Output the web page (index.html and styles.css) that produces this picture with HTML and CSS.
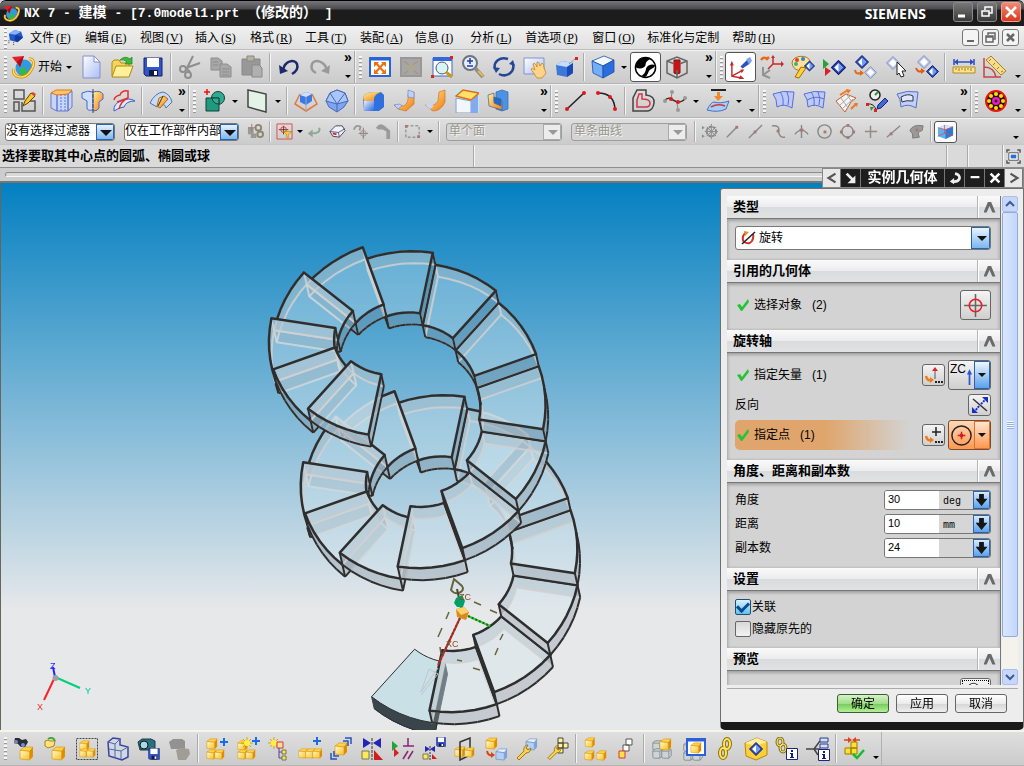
FILE: index.html
```
<!DOCTYPE html>
<html lang="zh-CN">
<head>
    <meta charset="utf-8">
    <title>NX 7 - 建模</title>
    <link rel="stylesheet" href="styles.css">
</head>
<body>
    <!-- shared icon parts -->
    <svg class="defs" aria-hidden="true">
        <defs>
            <linearGradient id="gBlue" x1="0" y1="0" x2="1" y2="1"><stop offset="0" stop-color="#e4efff"/><stop offset="1" stop-color="#2f66e0"/></linearGradient>
            <linearGradient id="gPale" x1="0" y1="0" x2="1" y2="1"><stop offset="0" stop-color="#ffffff"/><stop offset="1" stop-color="#a9bdf5"/></linearGradient>
            <linearGradient id="gGold" x1="0" y1="0" x2="1" y2="1"><stop offset="0" stop-color="#fffbd0"/><stop offset="1" stop-color="#ffbe20"/></linearGradient>
            <linearGradient id="gFire" x1="0" y1="0" x2="1" y2="1"><stop offset="0" stop-color="#fff09a"/><stop offset="1" stop-color="#f47a10"/></linearGradient>
        </defs>
        <symbol id="cubeY" viewBox="0 0 14 14"><path d="M1 4L5 1H13L10 5Z" fill="#ffd24a" stroke="#d89400" stroke-width=".6"/><path d="M1 4L10 5V13L1 12Z" fill="url(#gGold)" stroke="#d89400" stroke-width=".6"/><path d="M10 5L13 1V10L10 13Z" fill="#e08c00"/></symbol>
        <symbol id="cubeB" viewBox="0 0 14 14"><path d="M1 4L5 1H13L10 5Z" fill="#e6f1ff" stroke="#5f83c4" stroke-width=".6"/><path d="M1 4L10 5V13L1 12Z" fill="#b5d0f5" stroke="#5f83c4" stroke-width=".6"/><path d="M10 5L13 1V10L10 13Z" fill="#7ba2dd"/></symbol>
        <symbol id="cubeW" viewBox="0 0 14 14"><path d="M1 4Q1 2 5 1H11Q13 1 13 3V10L10 13H3Q1 13 1 11ZM1 4H10V13M10 4L13 2" fill="#cdd3d6" stroke="#77848d"/></symbol>
        <symbol id="dia" viewBox="0 0 14 14"><path d="M7 .5L13.500 7L7 13.500L.5 7Z" fill="#2a4fc0" stroke="#101c70"/><path d="M7 3L11 7L7 11L3 7Z" fill="#fff"/><path d="M7 3L11 7L7 11Z" fill="#6f9df0"/></symbol>
        <symbol id="diaP" viewBox="0 0 14 14"><path d="M7 .5L13.500 7L7 13.500L.5 7Z" fill="#b9c5e6" stroke="#8591bd"/><path d="M7 3L11 7L7 11L3 7Z" fill="#fff"/></symbol>
        <symbol id="floppy" viewBox="0 0 20 20"><path d="M1 1H19V19H3L1 17Z" fill="#3455c8" stroke="#15206a"/><path d="M4 1H16V10H4Z" fill="#fff"/><path d="M6 13H15V19H6Z" fill="#111a40"/><path d="M11 14H14V18H11Z" fill="#fff"/></symbol>
        <symbol id="plus" viewBox="0 0 8 8"><path d="M4 0V8M0 4H8" stroke="#1b6be8" stroke-width="2"/></symbol>
        <symbol id="wrench" viewBox="0 0 16 16"><path d="M1 14L8 7C7 3 10 1 12 1L10 4L12 6L15 4C15 7 13 9 10 9L3 16Z" fill="#ffd24a" stroke="#8a6500" stroke-width=".8"/></symbol>
        <symbol id="info" viewBox="0 0 12 12"><path d="M.5.5H11.500V11.500H.5Z" fill="#fff" stroke="#1c2580"/><path d="M5 2H7V4H5ZM4 5H7V9H8V10H4V9H5V6H4Z" fill="#141c78"/></symbol>
        <symbol id="burst" viewBox="0 0 12 12"><path d="M6 0V12M0 6H12M2 2L10 10M10 2L2 10" stroke="#d8a800"/><circle cx="6" cy="6" r="3" fill="#ffef40"/></symbol>
        <symbol id="nx" viewBox="0 0 24 24"><circle cx="13" cy="13" r="8.500" fill="#2f9ae0"/><path d="M9 19Q7 14 12 12Q17 14 15 21Q12 22 9 19Z" fill="#35b84a"/><path d="M3 14C0 22 12 25 18 18C24 11 24 3 18 4" fill="none" stroke="#d88a00" stroke-width="3"/><path d="M3 14C0 22 12 25 18 18C24 11 24 3 18 4" fill="none" stroke="#ffe060" stroke-width="1.500"/><path d="M1 2L13 1L9 12Z" fill="#e3202a"/><path d="M6 7L13 1L9 12Z" fill="#a80d18"/></symbol>
    </svg>

    <header class="titlebar">
        <svg class="app-icon" viewBox="0 0 24 24"><use href="#nx"/></svg>
        <h1>NX 7 - <span>建模</span> - [7.0model1.prt <span>（修改的）</span> ]</h1>
        <strong class="brand">SIEMENS</strong>
        <div class="win-buttons">
            <button aria-label="最小化"><svg viewBox="0 0 18 18"><path d="M4 13H11" stroke="#fff" stroke-width="3"/></svg></button>
            <button aria-label="还原"><svg viewBox="0 0 18 18"><path d="M7 7V4H14V10H11M4 8H11V13H4Z" fill="none" stroke="#fff" stroke-width="1.500"/></svg></button>
            <button class="close" aria-label="关闭"><svg viewBox="0 0 18 18"><path d="M4 4L14 14M14 4L4 14" stroke="#fff" stroke-width="2.500"/></svg></button>
        </div>
    </header>

    <nav class="menubar">
        <i class="grip"></i>
        <svg class="menu-icon" viewBox="0 0 18 18"><path d="M2 5L8 1L15 3L17 9L11 14L3 12Z" fill="#2458c8"/><path d="M2 5L8 1L15 3L9 6Z" fill="#86b4ff"/><path d="M9 6L17 9L11 14L8 11Z" fill="#123a98"/><path d="M2 12V16M7 14V17" stroke="#333" stroke-dasharray="1 1"/></svg>
        <a href="#">文件<span>(<u>F</u>)</span></a>
        <a href="#">编辑<span>(<u>E</u>)</span></a>
        <a href="#">视图<span>(<u>V</u>)</span></a>
        <a href="#">插入<span>(<u>S</u>)</span></a>
        <a href="#">格式<span>(<u>R</u>)</span></a>
        <a href="#">工具<span>(<u>T</u>)</span></a>
        <a href="#">装配<span>(<u>A</u>)</span></a>
        <a href="#">信息<span>(<u>I</u>)</span></a>
        <a href="#">分析<span>(<u>L</u>)</span></a>
        <a href="#">首选项<span>(<u>P</u>)</span></a>
        <a href="#">窗口<span>(<u>O</u>)</span></a>
        <a href="#">标准化与定制</a>
        <a href="#">帮助<span>(<u>H</u>)</span></a>
        <div class="mdi-buttons">
            <button aria-label="最小化窗口"><svg viewBox="0 0 15 15"><path d="M4 11H11" stroke="#666" stroke-width="2"/></svg></button>
            <button aria-label="还原窗口"><svg viewBox="0 0 15 15"><path d="M5 5V3H12V9H10M3 6H10V12H3ZM3 7H10" fill="none" stroke="#666" stroke-width="1.500"/></svg></button>
            <button aria-label="关闭窗口"><svg viewBox="0 0 15 15"><path d="M4 4L11 11M11 4L4 11" stroke="#666" stroke-width="2.500"/></svg></button>
        </div>
    </nav>

    <!-- standard / view / assembly tools -->
    <div class="toolbar row-one">
        <section class="group">
            <i class="grip"></i>
            <button class="start"><svg viewBox="0 0 24 24"><use href="#nx"/></svg>开始<i class="arrow"></i></button>
            <button class="tool" aria-label="新建"><svg viewBox="0 0 24 24"><path d="M4 1H15L21 7V23H4Z" fill="url(#gPale)" stroke="#8390cc"/><path d="M15 1V7H21Z" fill="#fff" stroke="#8390cc"/></svg></button>
            <button class="tool" aria-label="打开"><svg viewBox="0 0 24 24"><path d="M2 21V7L4 5H9L11 8H19V21Z" fill="#f5d55c" stroke="#b08a10"/><path d="M2 22L6 11H23L19 22Z" fill="#fff09a" stroke="#b08a10"/><path d="M10 5Q15 0 20 4L22 2V9H15L17 7Q14 4 10 5Z" fill="#3fb83a" stroke="#1e7e1c" stroke-width=".7"/></svg></button>
            <button class="tool" aria-label="保存"><svg viewBox="0 0 24 24"><use href="#floppy" x="2" y="2" width="20" height="20"/></svg></button>
            <i class="sep"></i>
            <button class="tool" aria-label="剪切"><svg viewBox="0 0 24 24" fill="none" stroke="#8e8e8e" stroke-width="2"><path d="M8 15L15 1M8 13L22 8M9 14L12 17"/><circle cx="5" cy="14" r="3"/><circle cx="10" cy="20" r="3"/></svg></button>
            <button class="tool" aria-label="复制"><svg viewBox="0 0 24 24" fill="#a8a8a8" stroke="#8c8c8c"><path d="M2 3H9L13 6V15H2Z"/><path d="M11 9H18L22 12V22H11Z"/><path d="M4 7H9M4 10H9M13 14H20M13 17H20M13 20H20"/></svg></button>
            <button class="tool" aria-label="粘贴"><svg viewBox="0 0 24 24" stroke="#888"><path d="M2 4H20V20H2Z" fill="#989898"/><path d="M7 1H14V6H7Z" fill="#b9b29c"/><path d="M12 10H19L22 13V22H12Z" fill="#b0b0b0"/></svg></button>
            <i class="sep"></i>
            <button class="tool" aria-label="撤消"><svg viewBox="0 0 24 24"><path d="M6 15C8 5 18 4 20 9Q22 15 15 19" fill="none" stroke="#1c2a6c" stroke-width="2.500"/><path d="M2 10L3 19L11 16Z" fill="#1c2a6c"/></svg></button>
            <button class="tool" aria-label="重做"><svg viewBox="0 0 24 24"><path d="M19 15C16 5 6 4 4 9Q2 15 8 18" fill="none" stroke="#999" stroke-width="2.500"/><path d="M22 10L21 19L13 16Z" fill="#999"/></svg></button>
            <button class="more" aria-label="更多"></button>
        </section>
        <section class="group">
            <i class="grip"></i>
            <button class="tool" aria-label="适合窗口"><svg viewBox="0 0 24 24"><path d="M2 3H22V21H2Z" fill="#fff" stroke="#2a62d8" stroke-width="2"/><path d="M2 4H22" stroke="#2a62d8" stroke-width="3"/><path d="M8 8L16 17M16 8L8 17" stroke="#ee7011" stroke-width="2"/><path d="M6 7H11L6 12ZM18 7H13L18 12ZM6 19V14L11 19ZM18 19V14L13 19Z" fill="#ee7011"/></svg></button>
            <button class="tool" aria-label="适合所选"><svg viewBox="0 0 24 24"><path d="M2 3H22V21H2Z" fill="#a6a6a6" stroke="#989898" stroke-width="2"/><path d="M5 6L10 10M19 6L14 10M5 19L10 15M19 19L14 15" stroke="#b49080" stroke-width="1.500"/><path d="M9 10H15V16H9Z" fill="#aba88e"/></svg></button>
            <button class="tool" aria-label="缩放"><svg viewBox="0 0 24 24"><path d="M3 3H22V21H3Z" fill="#fff" stroke="#3a66c8"/><path d="M3 4H22" stroke="#3468dd" stroke-width="4"/><circle cx="12" cy="13" r="6" fill="#c9f0f4" fill-opacity=".7" stroke="#556"/><path d="M16 17L22 22" stroke="#c79a20" stroke-width="3"/><path d="M1 20H4V23H1ZM20 1H23V4H20Z" fill="#d22"/></svg></button>
            <button class="tool" aria-label="放大缩小"><svg viewBox="0 0 24 24"><circle cx="9" cy="8" r="7" fill="#e4edff" stroke="#6e7280" stroke-width="2"/><path d="M9 3V9M6 6H12M6 11H12" stroke="#2538a8" stroke-width="1.500"/><path d="M14 13L22 22" stroke="#8d8d8d" stroke-width="4"/><path d="M17 16L22 21" stroke="#e8bb48" stroke-width="2"/></svg></button>
            <button class="tool" aria-label="旋转"><svg viewBox="0 0 24 24" fill="none" stroke="#24479a" stroke-width="2.500"><path d="M3 14C1 7 8 1 16 4M21 9C23 17 15 23 7 19"/><path d="M1 12L4 18L8 13ZM17 9L23 11L21 5Z" fill="#24479a" stroke="none"/></svg></button>
            <button class="tool" aria-label="平移"><svg viewBox="0 0 24 24"><path d="M1 3H21V19H1Z" fill="url(#gPale)" stroke="#7f93cf"/><path d="M12 20L8 14Q9 12 12 15L10 9Q12 7 14 12L14 7Q16 6 17 11L19 8Q21 9 21 13L23 18L19 23H14Z" fill="#ffd489" stroke="#c28324" stroke-width=".8"/></svg></button>
            <button class="tool" aria-label="透视"><svg viewBox="0 0 24 24"><path d="M2 10L8 6L19 8V18L13 22L3 20Z" fill="#3d78d8"/><path d="M2 10L8 6L19 8L13 12Z" fill="#c4dcff"/><path d="M13 12L19 8V18L13 22Z" fill="#1a4bb4"/><path d="M15 9L21 4" stroke="#888" stroke-dasharray="2 1"/><path d="M21 2H24V5H21Z" fill="#d22"/></svg></button>
            <i class="sep"></i>
            <button class="tool" aria-label="着色"><svg viewBox="0 0 24 24" stroke="#1d4cac" stroke-width=".8"><path d="M1 6L13 1L23 5L12 11Z" fill="#f3f8ff"/><path d="M1 6L12 11V23L2 18Z" fill="#72aefa"/><path d="M12 11L23 5V17L12 23Z" fill="#2a6ede"/></svg></button>
            <i class="arrow"></i>
            <button class="tool on" aria-label="面分析"><svg viewBox="0 0 24 24"><circle cx="12" cy="12" r="10.500" fill="#fff" stroke="#000" stroke-width="1.500"/><path d="M2 12A10 10 0 0 1 17 3C13 5 12 7 12 10C10 13 6 14 2 12Z" fill="#000"/><path d="M7 21C12 19 12 15 13 12C15 9 20 8 22 10C21 13 18 13 16 15C14 18 14 21 11 22Z" fill="#000"/></svg></button>
            <button class="tool" aria-label="剖切"><svg viewBox="0 0 24 24" fill="none" stroke="#666"><path d="M9 5H15V18L12 19L9 18Z" fill="#d01818" stroke="#7c0c0c"/><path d="M2 6L12 2L22 6V18L12 23L2 18ZM2 6L12 10L22 6M12 10V23" stroke-width="1.500"/><path d="M9 7Q12 5 15 7V15H9Z" fill="#c81414" stroke="none"/></svg></button>
            <button class="more" aria-label="更多"></button>
        </section>
        <section class="group">
            <i class="grip"></i>
            <button class="tool on" aria-label="动态坐标系"><svg viewBox="0 0 24 24"><path d="M3 9V21L13 23M3 21L14 15" fill="none" stroke="#c42828" stroke-width="1.500"/><path d="M1 10L3 5L5 10ZM12 14L16 14L13 18ZM12 20L16 24L10 24Z" fill="#c42828"/><path d="M12 11L18 5L22 2L23 6L20 9L14 13Z" fill="#2c4fc0"/><path d="M18 3L22 1L24 5L21 9Z" fill="#7ca5f3"/></svg></button>
            <button class="tool" aria-label="移动坐标系"><svg viewBox="0 0 24 24" fill="none"><path d="M13 2V9L22 9M13 9L8 14" stroke="#c82b2b" stroke-width="1.500"/><path d="M3 12V20L10 23M3 20L10 15" stroke="#929292" stroke-width="2"/><path d="M1 5Q4 1 7 4L9 2" stroke="#e86a18" stroke-width="2.500"/><path d="M21 6L24 9L21 12ZM11 3H15L13 0Z" fill="#c82b2b"/></svg></button>
            <button class="tool" aria-label="对象显示"><svg viewBox="0 0 24 24"><path d="M1 8C1 0 17 -1 19 6C20 11 13 9 13 13C11 17 2 16 1 8Z" fill="#ffe09c" stroke="#aa7620"/><circle cx="6" cy="5" r="2" fill="#e33"/><circle cx="12" cy="4" r="2" fill="#28c"/><circle cx="5" cy="9" r="2" fill="#2b8"/><path d="M4 22L10 12L15 13L8 23Z" fill="#ffd13c" stroke="#a07200"/><use href="#dia" x="13" y="5" width="11" height="12"/></svg></button>
            <button class="tool" aria-label="装配序列"><svg viewBox="0 0 24 24"><path d="M1 4L7 9L1 14Z" fill="#23a33c"/><path d="M3 12L9 16L3 21Z" fill="#d52424"/><use href="#dia" x="9" y="5" width="15" height="15"/></svg></button>
            <button class="tool" aria-label="替换组件"><svg viewBox="0 0 24 24"><use href="#dia" x="2" y="0" width="14" height="14"/><use href="#diaP" x="11" y="11" width="13" height="13"/><path d="M2 15Q3 20 7 18" fill="none" stroke="#e56a12" stroke-width="2"/><path d="M7 15L11 18L7 21Z" fill="#e56a12"/></svg></button>
            <button class="tool" aria-label="选择组件"><svg viewBox="0 0 24 24"><use href="#diaP" x="2" y="1" width="14" height="14"/><path d="M13 7L22 16L18 16L20 21L17 22L15 18L13 20Z" fill="#fff" stroke="#222"/></svg></button>
            <button class="tool" aria-label="移动组件"><svg viewBox="0 0 24 24"><use href="#diaP" x="2" y="0" width="14" height="14"/><use href="#dia" x="11" y="10" width="13" height="13"/><path d="M1 13Q3 18 7 16" fill="none" stroke="#e05a12" stroke-width="2"/><path d="M6 13L10 16L6 19Z" fill="#e05a12"/></svg></button>
            <i class="sep"></i>
            <button class="tool" aria-label="测量距离"><svg viewBox="0 0 24 24"><path d="M2 4V10M22 4V10M3 7H21" stroke="#2c4dc0" stroke-width="1.500"/><path d="M6 4V10L2 7ZM18 4V10L22 7Z" fill="#2c4dc0"/><path d="M1 12H23V18H1Z" fill="#ffe38a" stroke="#b28a26"/><path d="M4 13V15M7 13V16M10 13V15M13 13V16M16 13V15M19 13V16" stroke="#a07a20"/></svg></button>
            <button class="tool" aria-label="测量角度"><svg viewBox="0 0 24 24"><path d="M1 3V22H18M1 12Q11 12 13 22" fill="none" stroke="#c64545" stroke-width="1.500"/><path d="M3 5L8 1L23 16L18 20Z" fill="#f8dc86" stroke="#a6822c"/><path d="M8 4L6 6M12 8L10 10M16 12L14 14M20 16L18 17" stroke="#a07a20"/></svg></button>
            <button class="more plain" aria-label="更多"></button>
        </section>
    </div>

    <!-- feature / curve / surface tools -->
    <div class="toolbar row-two">
        <section class="group">
            <i class="grip"></i>
            <button class="tool" aria-label="草图"><svg viewBox="0 0 24 24"><path d="M1 1H11V10H1ZM1 13H6V22H1ZM9 17V22H22V12H17M9 22V13" fill="none" stroke="#555" stroke-width="1.500"/><path d="M10 17L12 12L18 4L22 7L15 14Z" fill="#ffc627" stroke="#5e4300"/><path d="M18 4L22 7L23 5L20 3Z" fill="#d44"/></svg></button>
            <i class="sep"></i>
            <button class="tool" aria-label="拉伸"><svg viewBox="0 0 24 24" stroke="#6b79cc"><path d="M1 4V19L7 22V5ZM18 5V22L22 18V2ZM7 5H18V22H7Z" fill="#c6d6fa"/><path d="M11 5V22M15 5V22" fill="none" stroke="#5d78d5" stroke-dasharray="2 1"/><path d="M1 4L6 1H22L18 5L7 6Z" fill="#ffc46a" stroke="#e07818"/></svg></button>
            <button class="tool" aria-label="回转"><svg viewBox="0 0 24 24"><path d="M1 4Q7 1 12 3V21Q6 22 6 19V12L1 9Z" fill="#cfdfff" stroke="#4368cf"/><path d="M12 3Q19 1 22 5V10L18 13V19Q17 22 12 22Z" fill="url(#gFire)" stroke="#5a68b8"/><path d="M12 0V24" stroke="#445" stroke-dasharray="4 1"/></svg></button>
            <button class="tool" aria-label="扫掠"><svg viewBox="0 0 24 24"><path d="M2 22Q1 15 9 12Q17 8 23 12Q14 12 12 18Q8 18 2 22Z" fill="#dfe8ff" stroke="#375ec6"/><path d="M2 11Q3 7 8 6Q10 1 16 2L16 9Q9 12 7 20M5 13L16 9" fill="none" stroke="#e03131" stroke-width="1.500"/></svg></button>
            <i class="sep"></i>
            <button class="tool" aria-label="修剪"><svg viewBox="0 0 24 24"><path d="M1 14Q6 4 14 3Q21 5 23 13L17 19Q15 12 8 18Z" fill="#c5dcfa" stroke="#55749f"/><path d="M8 17L10 9L15 7L19 10L11 19Z" fill="url(#gFire)" stroke="#b26b0d"/><path d="M9 17L14 7" stroke="#333"/></svg></button>
            <button class="more" aria-label="更多"></button>
        </section>
        <section class="group">
            <i class="grip"></i>
            <button class="tool" aria-label="布尔"><svg viewBox="0 0 24 24"><circle cx="16" cy="9" r="6.500" fill="#2fab91" stroke="#173f38"/><path d="M4 9H17V22H4Z" fill="#1d9a80" stroke="#173f38"/><path d="M10 9H17V15Q11 15 10 9Z" fill="#2fab91" stroke="#173f38"/><path d="M5 0V6M2 3H8" stroke="#e11" stroke-width="1.500"/></svg></button>
            <i class="arrow"></i>
            <button class="tool" aria-label="基准平面"><svg viewBox="0 0 24 24"><path d="M3 1L21 5V23L3 18Z" fill="#e3f4e6" stroke="#444" stroke-width="1.500"/></svg></button>
            <i class="arrow"></i>
            <i class="sep"></i>
            <button class="tool" aria-label="凸台"><svg viewBox="0 0 24 24"><path d="M6 5L1 15L12 22L23 15L18 5" fill="none" stroke="#e07a3c" stroke-width="1.500"/><path d="M6 6L12 3L18 5V12L12 16L6 13Z" fill="#3a79e6"/><path d="M6 6L12 3L18 5L12 8Z" fill="#cfe0ff"/><path d="M12 8V22" stroke="#9ab"/></svg></button>
            <button class="tool" aria-label="球体"><svg viewBox="0 0 24 24" stroke="#4568b8"><path d="M12 1L20 4L23 12L19 18L12 23L4 18L1 12L5 4Z" fill="#7fa5ee"/><path d="M12 1L5 4L1 12L12 15L23 12L20 4Z" fill="#a9c6fb"/><path d="M5 4L12 15L20 4M12 15V23" fill="none"/></svg></button>
            <i class="sep"></i>
            <button class="tool" aria-label="边倒圆"><svg viewBox="0 0 24 24"><path d="M1 8Q4 3 12 3H19L22 6V18L17 22H2Z" fill="#2f6fde"/><path d="M1 8Q4 3 12 3H19Q13 5 12 9V12H2Z" fill="url(#gFire)"/><path d="M2 12H12V22H2Z" fill="url(#gBlue)"/></svg></button>
            <button class="tool" aria-label="面倒圆"><svg viewBox="0 0 24 24"><path d="M1 16L11 17Q16 14 15 5L21 3V15L13 22L5 20Z" fill="url(#gFire)" stroke="#c36a18" stroke-width=".6"/><path d="M15 1L21 3V9L15 8ZM1 16L7 15L9 17L5 20Z" fill="#bdd1fb" stroke="#6482c8" stroke-width=".6"/></svg></button>
            <button class="tool" aria-label="软倒圆"><svg viewBox="0 0 24 24"><path d="M1 16Q10 19 14 12L15 3L21 1V13Q17 22 9 22Z" fill="url(#gFire)" stroke="#c36a18" stroke-width=".6"/><path d="M1 16L6 15L10 17L6 20Z" fill="#c6d7ff"/></svg></button>
            <button class="tool" aria-label="倒斜角"><svg viewBox="0 0 24 24"><path d="M0 1H24V24H0Z" fill="#b5eaf6"/><path d="M1 9L16 12V24H1Z" fill="#f2f6fd" stroke="#879ac0"/><path d="M16 12L23 5V24H16Z" fill="#82aaf0"/><path d="M1 7L8 1L24 4L16 11Z" fill="#ffe069" stroke="#e56a14" stroke-width="1.500"/></svg></button>
            <button class="tool" aria-label="抽壳"><svg viewBox="0 0 24 24" stroke="#3a64a0" stroke-width=".7"><path d="M10 3L16 1L22 3V20L16 22L10 20Z" fill="#4b94e5"/><path d="M2 6L8 4V12H16V21L3 17Z" fill="url(#gFire)"/><path d="M8 8L15 10V17L8 14Z" fill="#2767c8"/></svg></button>
            <button class="more" aria-label="更多"></button>
        </section>
        <section class="group">
            <i class="grip"></i>
            <button class="tool" aria-label="直线"><svg viewBox="0 0 24 24"><path d="M3 20L20 4" stroke="#222" stroke-width="1.500"/><circle cx="3" cy="20" r="2" fill="#e01818"/><circle cx="20" cy="4" r="2" fill="#e01818"/></svg></button>
            <button class="tool" aria-label="圆弧"><svg viewBox="0 0 24 24"><path d="M3 4Q19 4 20 20" fill="none" stroke="#222" stroke-width="1.500"/><circle cx="3" cy="4" r="2" fill="#e01818"/><circle cx="15" cy="8" r="2" fill="#e01818"/><circle cx="20" cy="20" r="2" fill="#e01818"/></svg></button>
            <i class="sep"></i>
            <button class="tool" aria-label="偏置曲线"><svg viewBox="0 0 24 24" fill="none"><path d="M5 1H14V6Q23 7 22 14Q21 21 16 22H1V9Z" stroke="#444" stroke-width="1.500"/><path d="M7 5H10V10Q18 10 18 14Q18 18 14 18H5V11Z" stroke="#d23544" stroke-width="1.500"/></svg></button>
            <button class="tool" aria-label="样条"><svg viewBox="0 0 24 24"><path d="M1 12Q5 8 8 10L14 13Q18 14 23 9" fill="none" stroke="#333" stroke-width="1.500"/><path d="M8 10L9 3M14 13L15 21" stroke="#888"/><g fill="#999"><circle cx="2" cy="12" r="2"/><circle cx="9" cy="3" r="2"/><circle cx="15" cy="21" r="2"/><circle cx="22" cy="9" r="2"/></g><circle cx="8" cy="10" r="2" fill="#e01818"/><circle cx="15" cy="13" r="2" fill="#e01818"/></svg></button>
            <i class="arrow"></i>
            <button class="tool" aria-label="投影曲线"><svg viewBox="0 0 24 24"><path d="M1 21Q5 13 8 13Q14 15 23 12L20 20Q12 24 1 21Z" fill="#a7cdfb" stroke="#4971b8"/><path d="M5 18Q12 14 19 17" fill="none" stroke="#d93333" stroke-width="1.500"/><path d="M5 1H20" stroke="#222" stroke-width="2"/><path d="M11 3H14V7H17L12 12L8 7H11Z" fill="#ef8a2b"/></svg></button>
            <i class="arrow"></i>
            <button class="more plain" aria-label="更多"></button>
        </section>
        <section class="group">
            <i class="grip"></i>
            <button class="tool" aria-label="直纹"><svg viewBox="0 0 24 24" stroke="#5a6dd4"><path d="M1 5Q11 1 22 3L20 19Q12 14 5 18Q5 10 1 5Z" fill="#bccafa"/><path d="M8 3Q12 8 11 16M15 3Q18 9 16 16" fill="none"/></svg></button>
            <button class="tool" aria-label="通过曲线组"><svg viewBox="0 0 24 24" stroke="#5a6dd4"><path d="M1 5Q11 1 22 3L20 19Q12 14 5 18Q5 10 1 5Z" fill="#bccafa"/><path d="M8 3Q12 8 11 16M15 3Q18 9 16 16M4 11Q13 6 21 10" fill="none"/></svg></button>
            <button class="tool" aria-label="通过曲线网格"><svg viewBox="0 0 24 24"><path d="M2 12L12 5L22 9L17 13L11 23Z" fill="#f5f5f5" stroke="#c9602e"/><path d="M7 9L14 19M13 6L18 13M6 16L16 7M9 19L19 10" stroke="#a7a7a7"/><path d="M6 6L14 1M17 20L22 15" stroke="#ee7a20" stroke-width="2"/><path d="M12 0L17 1L14 5ZM20 14L24 14L23 18Z" fill="#ee7a20"/></svg></button>
            <button class="tool" aria-label="曲面分析"><svg viewBox="0 0 24 24"><circle cx="10" cy="6" r="5" fill="#eee" stroke="#222" stroke-width="1.500"/><path d="M10 6L13 3" stroke="#2a9a30" stroke-width="2"/><path d="M2 15Q10 14 11 22" fill="none" stroke="#222"/><path d="M1 14H4V17H1ZM9 20H12V23H9Z" fill="#e02020"/><path d="M13 16L20 9L23 12L16 19L12 20Z" fill="#4267db" stroke="#1a2572"/><path d="M5 18L9 18L6 22Z" fill="#2a9a30"/></svg></button>
            <button class="tool" aria-label="扩大曲面"><svg viewBox="0 0 24 24" stroke="#5570c8"><path d="M1 5Q11 1 22 3L20 19Q12 14 5 18Q5 10 1 5Z" fill="#c0d0fb"/><path d="M5 8Q12 4 17 7V12Q10 11 6 13Z" fill="#dfe7ff" stroke="#333"/></svg></button>
            <button class="more" aria-label="更多"></button>
        </section>
        <section class="group">
            <i class="grip"></i>
            <button class="tool" aria-label="渲染"><svg viewBox="0 0 24 24"><circle cx="12" cy="12" r="10" fill="#2a1010" stroke="#e81414" stroke-width="2"/><g fill="#ffe000"><circle cx="12" cy="5" r="2"/><circle cx="17" cy="7" r="2"/><circle cx="19" cy="12" r="2"/><circle cx="17" cy="17" r="2"/><circle cx="12" cy="19" r="2"/><circle cx="7" cy="17" r="2"/><circle cx="5" cy="12" r="2"/><circle cx="7" cy="7" r="2"/></g><circle cx="12" cy="12" r="4" fill="#e818d0"/><circle cx="12" cy="12" r="1.500" fill="#222"/></svg></button>
            <button class="more plain" aria-label="更多"></button>
        </section>
    </div>

    <!-- selection bar -->
    <div class="toolbar selection">
        <label class="combo type-filter"><select aria-label="类型过滤器"><option>没有选择过滤器</option></select></label>
        <label class="combo scope-filter"><select aria-label="选择范围"><option>仅在工作部件内部</option></select></label>
        <button class="mini" aria-label="常规选择"><svg viewBox="0 0 18 18"><path d="M1 5H7V12H1ZM4 11H10V16H4Z" fill="#999"/><path d="M5 1V9M1 5H9" stroke="#a07878"/><circle cx="12" cy="5" r="3" fill="none" stroke="#8b8670" stroke-width="2"/><circle cx="14" cy="12" r="3" fill="none" stroke="#8b8670" stroke-width="2"/></svg></button>
        <i class="sep"></i>
        <button class="mini" aria-label="过滤器"><svg viewBox="0 0 18 18"><path d="M1 1H17V17H1Z" fill="none" stroke="#e04848"/><path d="M8 3V12M3 7H13" stroke="#733"/><circle cx="8" cy="7" r="3" fill="none" stroke="#d33"/><path d="M8 9H17L13 12V16L11 15V12Z" fill="#ffce2e" stroke="#a87a00" stroke-width=".6"/></svg></button>
        <i class="arrow narrow"></i>
        <button class="mini" aria-label="恢复"><svg viewBox="0 0 18 18"><path d="M14 5Q16 11 6 11" fill="none" stroke="#8aa79a" stroke-width="2"/><path d="M7 7V15L2 11Z" fill="#8aa79a"/></svg></button>
        <button class="mini" aria-label="清除"><svg viewBox="0 0 18 18"><path d="M1 9L7 3L14 3L17 8L11 15L4 14Z" fill="#eef3ff" stroke="#445"/><path d="M1 9L10 10L17 6M10 10L11 15" fill="none" stroke="#557"/><path d="M4 11L8 12" stroke="#e02020" stroke-width="2"/></svg></button>
        <button class="mini" aria-label="向上"><svg viewBox="0 0 18 18" fill="none" stroke="#999"><path d="M2 7Q4 1 9 4L8 8" stroke-width="2"/><circle cx="12" cy="11" r="3"/><path d="M12 5V17M7 11H17" stroke="#987878"/></svg></button>
        <button class="mini" aria-label="历史"><svg viewBox="0 0 18 18" fill="#9b9b9b"><path d="M1 5Q5 -1 10 3L16 8V17H12V9L8 7L3 7Z"/></svg></button>
        <i class="sep"></i>
        <button class="mini" aria-label="矩形选择"><svg viewBox="0 0 18 18"><path d="M2 3H16V15H2Z" fill="none" stroke="#777" stroke-dasharray="3 2"/><path d="M1 2H4V5H1ZM14 13H17V16H14Z" fill="#a77"/></svg></button>
        <i class="arrow"></i>
        <i class="sep"></i>
        <label class="combo off"><select disabled aria-label="面规则"><option>单个面</option></select></label>
        <label class="combo off"><select disabled aria-label="曲线规则"><option>单条曲线</option></select></label>
        <i class="sep"></i>
        <button class="mini" aria-label="捕捉点"><svg viewBox="0 0 18 18" fill="none" stroke="#8a8a8a"><path d="M11 1V17M4 9H18M6 4L16 14M16 4L6 14"/><circle cx="11" cy="9" r="5" stroke-dasharray="3 1" stroke-width="2"/><path d="M1 3L4 5L1 7ZM1 12L4 14L1 16Z" fill="#7b9b83" stroke="none"/></svg></button>
        <button class="mini" aria-label="端点"><svg viewBox="0 0 18 18"><path d="M3 15L14 4" stroke="#888" stroke-width="1.500"/><path d="M12 3H15V6H12Z" fill="#a77"/></svg></button>
        <button class="mini" aria-label="中点"><svg viewBox="0 0 18 18"><path d="M2 16L16 2" stroke="#888" stroke-width="1.500"/><path d="M7 8H10V11H7Z" fill="#a77"/></svg></button>
        <button class="mini" aria-label="控制点"><svg viewBox="0 0 18 18"><path d="M2 3Q11 2 9 9Q10 16 16 15" fill="none" stroke="#888" stroke-width="1.500"/><path d="M7 7H10V10H7Z" fill="#a77"/></svg></button>
        <button class="mini" aria-label="交点"><svg viewBox="0 0 18 18"><path d="M2 12Q9 3 16 12M9 2V16" fill="none" stroke="#888" stroke-width="1.500"/><path d="M7 6H11V9H7Z" fill="#a77"/></svg></button>
        <button class="mini" aria-label="圆心"><svg viewBox="0 0 18 18"><circle cx="9" cy="9" r="7" fill="none" stroke="#888" stroke-width="1.500"/><path d="M8 8H11V11H8Z" fill="#a77"/></svg></button>
        <button class="mini" aria-label="象限点"><svg viewBox="0 0 18 18"><circle cx="9" cy="9" r="6" fill="none" stroke="#888" stroke-width="1.500"/><path d="M8 1H11V4H8ZM8 14H11V17H8ZM1 8H4V11H1ZM14 8H17V11H14Z" fill="#a77"/></svg></button>
        <button class="mini" aria-label="现有点"><svg viewBox="0 0 18 18"><path d="M9 3V16M3 9H16" stroke="#988" stroke-width="1.500"/></svg></button>
        <button class="mini" aria-label="曲线上的点"><svg viewBox="0 0 18 18"><path d="M2 15L16 3" stroke="#888" stroke-width="1.500"/><path d="M5 10H8V13H5Z" fill="#a77"/></svg></button>
        <button class="mini" aria-label="面上的点"><svg viewBox="0 0 18 18"><path d="M2 8Q5 1 16 3L15 8Q9 9 12 15L5 16Q6 11 2 8Z" fill="#999" stroke="#777"/><path d="M8 6H11V9H8Z" fill="#a77"/></svg></button>
        <i class="sep"></i>
        <button class="mini on" aria-label="着色线框"><svg viewBox="0 0 18 18"><path d="M1 5L8 2L17 4V13L9 17L1 14Z" fill="#5fb0f2"/><path d="M1 5L8 2L17 4L9 7Z" fill="#d4e6ff"/><path d="M9 7V17L17 13V4Z" fill="#2b78d8"/><path d="M8 2V11L1 14M8 11L17 13M1 5L9 7L17 4" fill="none" stroke="#e04a4a" stroke-width=".8"/></svg></button>
        <button class="more plain" aria-label="更多"></button>
    </div>

    <div class="status">
        <p>选择要取其中心点的圆弧、椭圆或球</p>
        <span></span><span></span><span></span>
        <button aria-label="全屏"><svg viewBox="0 0 16 16" fill="none" stroke="#555"><path d="M1 4V1H4M12 1H15V4M15 12V15H12M4 15H1V12" stroke-width="1.500"/><path d="M3 4H13V12H3Z" fill="#fff"/><path d="M5 6H11V10H5Z" fill="#2a70d0" stroke="none"/></svg></button>
    </div>

    <main class="work">
        <div class="track"><i></i></div>
        <div class="viewport">
            <canvas id="model" width="1024" height="547"></canvas>
            <svg class="overlay" viewBox="0 183 1024 547" preserveAspectRatio="xMinYMin meet">
                <!-- datum plane and work coordinate system -->
                <g fill="none" stroke="#66633f" stroke-width="2">
                    <path d="M448 612L445 619M441 628L437 637M473 602L480 605M489 610L496 613M439 647L440 654M502 634L499 640M497 648L494 655M472 668L479 670M456 660L461 661" stroke-width="1.500"/>
                    <path d="M453 579L450 590Q453 594 458 593Q464 590 461 586Z"/>
                </g>
                <path d="M459 618L437 665" stroke="#e51a1a" stroke-width="2"/>
                <path d="M459 618L437 665" stroke="#584b35" stroke-width="2" stroke-dasharray="2 2"/>
                <path d="M467 616L489 626" stroke="#22dd22" stroke-width="2"/>
                <path d="M467 616L489 626" stroke="#3d5636" stroke-width="2" stroke-dasharray="2 2"/>
                <path d="M437 668L420 692L428 669L437 674L420 695" fill="none" stroke="#c0c6c9"/>
                <path d="M456 589L461 612" stroke="#4a4a30" stroke-width="2"/>
                <path d="M455 598L461 595L464 601L462 607H456L453 603Z" fill="#00a068"/>
                <path d="M460 605L461 613" stroke="#00a068" stroke-width="3"/>
                <path d="M455 609L463 607L468 612L465 620L456 617Z" fill="#d78a1d"/><path d="M455 609L463 607L468 612L460 615Z" fill="#ffd36b"/>
                <text x="458" y="600" class="wcs">ZC</text>
                <text x="445" y="647" class="wcs">XC</text>
                <!-- view triad -->
                <path d="M54 677L43 700" stroke="#ff1f2a" stroke-width="2"/>
                <path d="M54 677L79 688" stroke="#00cf7c" stroke-width="2"/>
                <path d="M54 677L52 667" stroke="#2424ff" stroke-width="2"/>
                <circle cx="54.500" cy="678" r="3" fill="#a0a0a4"/>
                <text x="49" y="669" class="triad" fill="#2424ff">Z</text>
                <text x="84" y="694" class="triad" fill="#00c98c">Y</text>
                <text x="36" y="710" class="triad" fill="#ff2a2a">X</text>
            </svg>
        </div>

        <aside class="dialog">
            <header class="dialog-bar">
                <button class="step" aria-label="上一个"><svg viewBox="0 0 16 16"><path d="M12 3L4 8L12 13" fill="none" stroke="#555" stroke-width="2.500"/></svg></button>
                <button aria-label="停靠"><svg viewBox="0 0 16 16"><path d="M3 3L10 10" stroke="#eee" stroke-width="3"/><path d="M13 5V14H4Z" fill="#eee"/></svg></button>
                <h2>实例几何体</h2>
                <button aria-label="重置"><svg viewBox="0 0 16 16"><path d="M8 3Q14 4 13 9Q11 13 5 12" fill="none" stroke="#eee" stroke-width="3"/><path d="M7 8L2 12L7 15Z" fill="#eee"/></svg></button>
                <button aria-label="折叠"><svg viewBox="0 0 16 16"><path d="M3 7H13" stroke="#fff" stroke-width="2.500"/></svg></button>
                <button aria-label="关闭对话框"><svg viewBox="0 0 16 16"><path d="M3 3L13 13M13 3L3 13" stroke="#fff" stroke-width="3"/></svg></button>
                <button class="step" aria-label="下一个"><svg viewBox="0 0 16 16"><path d="M4 3L12 8L4 13" fill="none" stroke="#555" stroke-width="2.500"/></svg></button>
            </header>

            <form class="dialog-body">
                <div class="scroller">
                    <div class="sections">
                        <h3>类型<button type="button" class="fold" aria-label="折叠类型"></button></h3>
                        <div class="part type">
                            <label class="combo big">
                                <svg viewBox="0 0 16 16"><path d="M5 3Q1 8 4 12Q9 15 12 11Q14 7 13 4" fill="none" stroke="#d2312a" stroke-width="2"/><path d="M4 1L9 2L5 6Z" fill="#e58a2a"/><path d="M2 14L15 2" stroke="#222" stroke-width="1.500"/></svg>
                                <select aria-label="类型"><option>旋转</option></select>
                            </label>
                        </div>

                        <h3>引用的几何体<button type="button" class="fold" aria-label="折叠几何体"></button></h3>
                        <div class="part geometry">
                            <div class="line">
                                <svg class="tick" viewBox="0 0 14 14"><path d="M1 7L4 6L6 9L12 1L13 4L6 13H5Z" fill="#22c435"/></svg>
                                <span>选择对象&nbsp;&nbsp; (2)</span>
                                <button type="button" class="pick" aria-label="选择对象"><svg viewBox="0 0 28 28"><path d="M14 3V25M3 14H25" stroke="#666" stroke-width="1.500"/><circle cx="14" cy="14" r="6" fill="none" stroke="#e82020" stroke-width="1.500"/></svg></button>
                            </div>
                        </div>

                        <h3>旋转轴<button type="button" class="fold" aria-label="折叠旋转轴"></button></h3>
                        <div class="part axis">
                            <div class="line">
                                <svg class="tick" viewBox="0 0 14 14"><path d="M1 7L4 6L6 9L12 1L13 4L6 13H5Z" fill="#22c435"/></svg>
                                <span>指定矢量&nbsp;&nbsp; (1)</span>
                                <button type="button" class="small" aria-label="矢量构造器"><svg viewBox="0 0 20 20"><path d="M11 14V5" stroke="#555"/><path d="M8 6L11 2L14 6Z" fill="#e02222"/><path d="M2 11Q3 16 7 15" fill="none" stroke="#ee7b16" stroke-width="2.500"/><path d="M6 12L10 15L6 18Z" fill="#ee7b16"/><path d="M11 17H19" stroke="#222" stroke-width="2" stroke-dasharray="2 1"/></svg></button>
                                <button type="button" class="drop" aria-label="矢量"><b>ZC</b><svg viewBox="0 0 8 22"><path d="M4 20V6" stroke="#2a56d8" stroke-width="2"/><path d="M1 8L4 2L7 8Z" fill="#2a56d8"/></svg><i></i></button>
                            </div>
                            <div class="line">
                                <span>反向</span>
                                <button type="button" class="small" aria-label="反向"><svg viewBox="0 0 20 20"><path d="M3 4L17 16" stroke="#333" stroke-width="1.500"/><path d="M11 9L16 4M9 11L5 16" stroke="#1c2cc8" stroke-width="2" stroke-dasharray="2 1"/><path d="M12 2H18V8ZM2 12L8 18H2Z" fill="#1c2cc8"/></svg></button>
                            </div>
                            <div class="line active">
                                <svg class="tick" viewBox="0 0 14 14"><path d="M1 7L4 6L6 9L12 1L13 4L6 13H5Z" fill="#22c435"/></svg>
                                <span>指定点&nbsp;&nbsp; (1)</span>
                                <button type="button" class="small" aria-label="点构造器"><svg viewBox="0 0 20 20"><path d="M12 2V11M8 7H17" stroke="#222" stroke-width="1.500"/><path d="M2 11Q3 16 7 15" fill="none" stroke="#ee7b16" stroke-width="2.500"/><path d="M6 12L10 15L6 18Z" fill="#ee7b16"/><path d="M11 17H19" stroke="#222" stroke-width="2" stroke-dasharray="2 1"/></svg></button>
                                <button type="button" class="drop hot" aria-label="点"><svg viewBox="0 0 24 24"><circle cx="12" cy="12" r="10" fill="none" stroke="#222" stroke-width="1.500"/><path d="M12 8V16M8 12H16" stroke="#d02020" stroke-width="1.500"/><circle cx="12" cy="12" r="2" fill="#d02020"/></svg><i></i></button>
                            </div>
                        </div>

                        <h3>角度、距离和副本数<button type="button" class="fold" aria-label="折叠参数"></button></h3>
                        <div class="part values">
                            <div class="line"><label for="angle">角度</label><span class="number"><input id="angle" value="30"><em>deg</em><button type="button" aria-label="角度选项"></button></span></div>
                            <div class="line"><label for="distance">距离</label><span class="number"><input id="distance" value="10"><em>mm</em><button type="button" aria-label="距离选项"></button></span></div>
                            <div class="line"><label for="copies">副本数</label><span class="number"><input id="copies" value="24"><em></em><button type="button" aria-label="副本数选项"></button></span></div>
                        </div>

                        <h3>设置<button type="button" class="fold" aria-label="折叠设置"></button></h3>
                        <div class="part settings">
                            <label class="check"><input type="checkbox" checked>关联</label>
                            <label class="check"><input type="checkbox">隐藏原先的</label>
                        </div>

                        <h3>预览<button type="button" class="fold" aria-label="折叠预览"></button></h3>
                        <div class="part geometry">
                            <div class="line"><button type="button" class="pick focus" aria-label="显示结果"><svg viewBox="0 0 28 28"><circle cx="12" cy="9" r="5" fill="#fff" stroke="#333"/></svg></button></div>
                        </div>
                    </div>
                    <div class="scrollbar">
                        <button type="button" aria-label="向上滚动"><svg viewBox="0 0 12 12"><path d="M2 8L6 4L10 8" fill="none" stroke="#3f5a8c" stroke-width="2"/></svg></button>
                        <div class="thumb"></div>
                        <button type="button" aria-label="向下滚动"><svg viewBox="0 0 12 12"><path d="M2 4L6 8L10 4" fill="none" stroke="#3f5a8c" stroke-width="2"/></svg></button>
                    </div>
                </div>
                <footer>
                    <button type="button" class="ok">确定</button>
                    <button type="button">应用</button>
                    <button type="button">取消</button>
                </footer>
            </form>
        </aside>
    </main>

    <!-- assemblies -->
    <div class="toolbar assemblies">
        <section class="group">
            <i class="grip"></i>
            <button class="tool" aria-label="查找组件"><svg viewBox="0 0 24 24"><use href="#cubeY" x="6" y="9" width="15" height="15"/><path d="M2 1H6L9 3L13 2L15 5L12 10H8L5 7L1 6Z" fill="#2a2c36"/><circle cx="3" cy="5" r="2" fill="#7a86b8"/><circle cx="10" cy="8" r="2" fill="#6f8fe0"/></svg></button>
            <button class="tool" aria-label="打开组件"><svg viewBox="0 0 24 24"><use href="#cubeY" x="7" y="9" width="15" height="15"/><path d="M1 9V4L4 3L6 4H11L10 9L4 11Z" fill="#ffe27a" stroke="#ab8417"/><path d="M4 2Q9 -1 11 4" fill="none" stroke="#3da83a" stroke-width="2"/></svg></button>
            <button class="tool" aria-label="产品轮廓"><svg viewBox="0 0 24 24"><path d="M1.500 1.500H22.500V22.500H1.500Z" fill="none" stroke="#444" stroke-dasharray="2 1"/><use href="#cubeY" x="4" y="3" width="11" height="11"/><use href="#cubeY" x="4" y="11" width="10" height="10"/><use href="#cubeY" x="11" y="11" width="10" height="10"/></svg></button>
            <button class="tool" aria-label="轮廓"><svg viewBox="0 0 24 24"><path d="M2 5L7 1L14 2V8L22 10V20L16 23L3 19Z" fill="#cfd9e4" stroke="#3d42a0" stroke-width="1.500"/><path d="M2 5L9 7L14 2M9 7V21M3 12L15 14L22 10M15 14V22" fill="none" stroke="#59699c"/></svg></button>
            <button class="tool" aria-label="保存上下文"><svg viewBox="0 0 24 24"><path d="M1 5L5 2H14L18 4V13H3Z" fill="#2c7080" stroke="#173c48"/><circle cx="7" cy="8" r="4" fill="#a9dbe2" stroke="#112"/><use href="#floppy" x="11" y="11" width="12" height="12"/></svg></button>
            <button class="tool" aria-label="恢复上下文"><svg viewBox="0 0 24 24" fill="#929292"><path d="M1 5L5 2H14L17 4V12H3Z"/><path d="M8 13L13 11L21 12L22 17L18 23H10Z" fill="#a09e94"/></svg></button>
            <i class="sep"></i>
            <button class="tool" aria-label="添加组件"><svg viewBox="0 0 24 24"><use href="#cubeY" x="1" y="1" width="12" height="12"/><use href="#cubeY" x="1" y="12" width="11" height="11"/><use href="#cubeY" x="9" y="12" width="11" height="11"/><use href="#plus" x="15" y="1" width="8" height="8"/></svg></button>
            <button class="tool" aria-label="新建组件"><svg viewBox="0 0 24 24"><use href="#cubeY" x="1" y="3" width="11" height="11"/><use href="#cubeY" x="1" y="12" width="11" height="11"/><use href="#cubeY" x="9" y="12" width="11" height="11"/><use href="#burst" x="5" y="0" width="12" height="12"/><use href="#plus" x="16" y="0" width="8" height="8"/></svg></button>
            <button class="tool" aria-label="新建父对象"><svg viewBox="0 0 24 24"><use href="#burst" x="1" y="0" width="12" height="12"/><path d="M10 5H16V11H10Z" fill="#ffe0a0" stroke="#d33"/><path d="M12 11V21H16M12 15H16" fill="none" stroke="#44a"/><path d="M15 13H19V17H15ZM15 19H19V23H15Z" fill="#ffe24a" stroke="#775"/></svg></button>
            <button class="tool" aria-label="组件阵列"><svg viewBox="0 0 24 24"><use href="#cubeY" x="0" y="11" width="11" height="11"/><use href="#cubeY" x="7" y="11" width="11" height="11"/><use href="#cubeY" x="14" y="11" width="11" height="11"/><use href="#plus" x="15" y="0" width="8" height="8"/></svg></button>
            <button class="tool" aria-label="移动组件"><svg viewBox="0 0 24 24"><use href="#cubeY" x="5" y="5" width="14" height="14"/><path d="M16 1H22V7M14 4H19V9M2 16V22H8M5 14V19H10" fill="none" stroke="#2b50c0" stroke-width="1.500"/></svg></button>
            <button class="tool" aria-label="镜像装配"><svg viewBox="0 0 24 24"><path d="M3 1L11 6L3 11ZM21 1L13 6L21 11Z" fill="#2524b8"/><path d="M12 1V23" stroke="#333" stroke-dasharray="3 1"/><path d="M2 14H9V22H2Z" fill="#ffe85a" stroke="#775"/><path d="M14 13L23 23H14Z" fill="#d41c1c"/></svg></button>
            <button class="tool" aria-label="装配约束"><svg viewBox="0 0 24 24"><path d="M1 4L7 9L1 14Z" fill="#24a33a"/><path d="M3 11L8 16L3 20Z" fill="#d82222"/><path d="M17 1V9M12 9H23M12 22L17 14M17 22L22 14" stroke="#8a2478" stroke-width="1.500"/></svg></button>
            <button class="tool" aria-label="记住约束"><svg viewBox="0 0 24 24"><use href="#floppy" x="14" y="0" width="10" height="10"/><path d="M3 9L8 12L3 15ZM13 9L8 12L13 15Z" fill="#2524b8"/><path d="M8 9V23" stroke="#333" stroke-dasharray="2 1"/><path d="M1 17H6V22H1Z" fill="#ffe85a" stroke="#775"/><path d="M10 17L15 22H10Z" fill="#d41c1c"/></svg></button>
            <button class="tool" aria-label="显示自由度"><svg viewBox="0 0 24 24"><use href="#cubeY" x="1" y="9" width="12" height="12"/><path d="M7 5L17 1V18L7 23Z" fill="none" stroke="#333" stroke-width="1.500"/><use href="#cubeY" x="11" y="10" width="11" height="11"/></svg></button>
            <button class="tool" aria-label="替换"><svg viewBox="0 0 24 24"><use href="#cubeY" x="1" y="0" width="13" height="13"/><use href="#cubeB" x="11" y="11" width="13" height="13"/><path d="M3 14Q4 19 8 18" fill="none" stroke="#d84414" stroke-width="2"/><path d="M7 15L11 18L7 21Z" fill="#d84414"/></svg></button>
            <button class="tool" aria-label="编辑"><svg viewBox="0 0 24 24"><use href="#cubeB" x="10" y="1" width="13" height="13"/><use href="#wrench" x="1" y="7" width="16" height="16"/></svg></button>
            <button class="tool" aria-label="编辑阵列"><svg viewBox="0 0 24 24"><path d="M12 1H17V6H12ZM17 6H22V11H17ZM12 6H17V11H12ZM12 11H17V16H12Z" fill="#fff29a" stroke="#444"/><use href="#wrench" x="1" y="7" width="15" height="16"/></svg></button>
            <i class="sep"></i>
            <button class="tool" aria-label="爆炸图"><svg viewBox="0 0 24 24"><use href="#cubeY" x="1" y="0" width="12" height="11"/><use href="#cubeY" x="1" y="13" width="11" height="11"/><use href="#cubeY" x="13" y="13" width="11" height="11"/></svg></button>
            <button class="tool" aria-label="装配顺序"><svg viewBox="0 0 24 24" fill="#fff" stroke="#555"><path d="M12 2H18V8H12ZM9 8H15V14H9Z"/><path d="M5 14H11V21H5Z" fill="#ffe24a" stroke="#d33"/></svg></button>
            <i class="sep"></i>
            <button class="tool" aria-label="工作部件"><svg viewBox="0 0 24 24"><use href="#cubeW" x="1" y="3" width="11" height="11"/><use href="#cubeW" x="1" y="11" width="11" height="11"/><use href="#cubeW" x="10" y="11" width="11" height="11"/><use href="#cubeY" x="8" y="1" width="13" height="13"/></svg></button>
            <button class="tool" aria-label="显示部件"><svg viewBox="0 0 24 24"><use href="#cubeW" x="1" y="5" width="10" height="10"/><use href="#cubeW" x="1" y="13" width="11" height="11"/><use href="#cubeW" x="10" y="13" width="11" height="11"/><path d="M5 2H23V18H5Z" fill="#fff" stroke="#2b60d8" stroke-width="2"/><path d="M5 3H23" stroke="#2b60d8" stroke-width="3"/><use href="#cubeY" x="8" y="5" width="12" height="12"/></svg></button>
            <button class="tool" aria-label="链接"><svg viewBox="0 0 24 24" fill="none"><g stroke="#8a7514" stroke-width="4"><ellipse cx="14" cy="7" rx="3" ry="5"/><ellipse cx="10" cy="16" rx="3" ry="5"/></g><g stroke="#ffe35c" stroke-width="2"><ellipse cx="14" cy="7" rx="3" ry="5"/><ellipse cx="10" cy="16" rx="3" ry="5"/></g></svg></button>
            <button class="tool" aria-label="部件间链接"><svg viewBox="0 0 24 24"><path d="M1 6L13 1L23 5V18L12 23L2 19Z" fill="#ffcf38" stroke="#b78611"/><path d="M1 6L13 1L23 5L12 9Z" fill="#fff0a0"/><use href="#dia" x="5" y="5" width="14" height="14"/></svg></button>
            <button class="tool" aria-label="关系"><svg viewBox="0 0 24 24"><g fill="none" stroke="#8a7514" stroke-width="3"><ellipse cx="5" cy="5" rx="3" ry="4"/><ellipse cx="8" cy="11" rx="3" ry="4"/></g><g fill="none" stroke="#ffe98a"><ellipse cx="5" cy="5" rx="3" ry="4"/><ellipse cx="8" cy="11" rx="3" ry="4"/></g><use href="#info" x="11" y="11" width="12" height="12"/></svg></button>
            <button class="tool" aria-label="关系浏览器"><svg viewBox="0 0 24 24"><path d="M0 12H8L14 4M8 12H14M8 12L12 18" fill="none" stroke="#444" stroke-width="1.500"/><path d="M14 1H22V5H14ZM14 7H22V11H14Z" fill="#cfe0f8" stroke="#2c3c88"/><use href="#info" x="12" y="12" width="12" height="12"/></svg></button>
            <i class="sep"></i>
            <button class="tool" aria-label="检查间隙"><svg viewBox="0 0 24 24"><path d="M1 3H6M17 3H13" stroke="#e0421a" stroke-width="1.500"/><path d="M5 0L9 3L5 6ZM13 0L9 3L13 6Z" fill="#e0421a"/><path d="M8 5H14V11H8ZM2 11H8V17H2ZM8 11H14V17H8Z" fill="#ffe030" stroke="#9a7c00"/><path d="M10 17L14 21L21 13" fill="none" stroke="#18bc28" stroke-width="2.500"/></svg></button>
            <i class="arrow low"></i>
        </section>
    </div>

    <script src="model.js"></script>
</body>
</html>
```

FILE: styles.css
```
* {
    box-sizing: border-box;
}

body {
    display: flex;
    flex-direction: column;
    margin: 0;
    height: 100vh;
    overflow: hidden;
    background: #d2d2d2;
    color: #000;
    font: 12px/16px "Liberation Sans", "Noto Sans CJK SC", sans-serif;
}

button, input, select {
    margin: 0;
    padding: 0;
    font: inherit;
    color: inherit;
}

button {
    border: none;
    background: none;
}

svg {
    display: block;
}

.defs {
    position: absolute;
    width: 0;
    height: 0;
}

/* title bar */
.titlebar {
    display: flex;
    align-items: center;
    flex: none;
    height: 26px;
    padding: 0 3px;
    border-top: 1px solid #000;
    border-radius: 6px 6px 0 0;
    background: linear-gradient(#77777b, #4a4a4e 8px, #1c1c1c 9px, #1c1c1c);
    color: #fff;
}

.app-icon {
    width: 17px;
    height: 17px;
    margin-right: 4px;
}

h1 {
    margin: 0;
    font: bold 13px/20px "Liberation Mono", "Noto Sans CJK SC", monospace;
    white-space: pre;
}

h1 span {
    font-size: 14px;
}

.brand {
    margin-left: auto;
    font: bold 14px/20px "Noto Sans", sans-serif;
}

.win-buttons {
    display: flex;
    gap: 4px;
    margin: 0 0 4px 27px;
}

.win-buttons button {
    width: 20px;
    height: 20px;
    border: 1px solid #8a8a8a;
    border-radius: 3px;
    background: linear-gradient(#777, #3a3a3a);
}

.win-buttons .close {
    border-color: #f0a090;
    background: linear-gradient(#f08a76, #d8371c);
}

/* menu */
.menubar {
    display: flex;
    align-items: center;
    flex: none;
    gap: 13px;
    height: 24px;
    padding-right: 5px;
    background: linear-gradient(#f0f0f0, #e0e0e0);
    border-bottom: 1px solid #bdbdbd;
}

.menubar .grip {
    margin-right: -13px;
}

.menu-icon {
    width: 17px;
    height: 17px;
    margin-right: -7px;
}

.menubar a {
    display: flex;
    color: #000;
    text-decoration: none;
    white-space: nowrap;
}

.menubar a span {
    width: 18px;
    padding-left: 2px;
    font: 12px/16px "Liberation Serif", serif;
}

.mdi-buttons {
    display: flex;
    gap: 3px;
    margin-left: auto;
}

.mdi-buttons button {
    width: 17px;
    height: 17px;
    border: 1px solid #777;
    border-radius: 3px;
    background: #f4f4f4;
}

/* toolbars */
.toolbar {
    display: grid;
    flex: none;
    height: 34px;
    background: linear-gradient(#dfdfdf, #cbcbcb);
    border-top: 1px solid #f3f3f3;
    border-bottom: 1px solid #b4b4b4;
}

.row-one {
    grid-template-columns: 355fr 361fr 308fr;
}

.row-two {
    grid-template-columns: 189fr 362fr 208fr 212fr 53fr;
}

.group {
    display: flex;
    align-items: center;
    min-width: 0;
    border-right: 1px solid #a9a9a9;
    box-shadow: 1px 0 #f1f1f1;
}

.group:last-child {
    border-right: none;
    box-shadow: none;
}

.grip {
    flex: none;
    width: 3px;
    height: 23px;
    margin: 0 2px 0 4px;
    background: repeating-linear-gradient(#f7f7f7 0 2px, #999 2px 3px, transparent 3px 4px);
}

.sep {
    flex: none;
    align-self: stretch;
    width: 2px;
    margin: 2px;
    border-left: 1px solid #ababab;
    border-right: 1px solid #f4f4f4;
}

.tool {
    display: grid;
    place-items: center;
    flex: none;
    width: 31px;
    height: 30px;
}

.tool svg, .start svg {
    width: 24px;
    height: 24px;
}

.tool.on svg {
    width: 23px;
    height: 23px;
}

.on {
    border: 1px solid #555;
    border-radius: 3px;
    background: #fff;
}

.start {
    display: flex;
    align-items: center;
    gap: 3px;
    width: 66px;
    padding-left: 2px;
}

.start .arrow {
    width: 8px;
}

.arrow {
    display: grid;
    place-items: center;
    flex: none;
    width: 12px;
}

.arrow.narrow {
    width: 7px;
}

.arrow.low {
    align-self: end;
    margin-bottom: 6px;
}

.arrow::before {
    content: "";
    border: 3px solid transparent;
    border-top-color: #000;
    border-bottom: none;
}

.more {
    display: flex;
    flex-direction: column;
    align-items: center;
    justify-content: space-between;
    align-self: stretch;
    width: 12px;
    margin-left: auto;
    padding-bottom: 5px;
}

.more::before {
    content: "»";
    font: bold 14px/12px "Liberation Sans", sans-serif;
}

.more::after {
    content: "";
    border: 3px solid transparent;
    border-top-color: #000;
    border-bottom: none;
}

.more.plain::before {
    content: "";
}

/* selection bar */
.selection {
    display: flex;
    align-items: center;
    height: 27px;
    padding: 0 2px 0 5px;
    border-bottom-color: #c6c6c6;
}

.mini {
    display: grid;
    place-items: center;
    flex: none;
    width: 23px;
    height: 22px;
}

.mini svg {
    width: 17px;
    height: 17px;
}

.combo {
    position: relative;
    display: flex;
    flex: none;
    width: 116px;
    height: 18px;
    border: 1px solid #777;
    border-radius: 3px;
    background: #fff;
    overflow: hidden;
}

.combo select {
    appearance: none;
    flex: 1;
    min-width: 0;
    border: none;
    background: none;
    line-height: 15px;
    color: #000;
    opacity: 1;
}

.combo::before, .combo::after {
    content: "";
    position: absolute;
    right: 0;
    pointer-events: none;
}

.combo::before {
    top: 0;
    bottom: 0;
    width: 16px;
    background: linear-gradient(#e8f3ff, #7db6ee);
    border: 1px solid #2a62b0;
}

.combo::after {
    top: 6px;
    right: 2px;
    border: 6px solid transparent;
    border-top-color: #111;
    border-bottom: none;
}

.type-filter {
    width: 110px;
    margin-right: 9px;
}

.scope-filter {
    width: 115px;
    margin-right: 5px;
}

.combo.off {
    margin: 0 5px 0 4px;
    border-color: #9d9d9d;
    background: #d4d4d4;
}

.combo.off select {
    padding-left: 2px;
    color: #98988c;
    text-shadow: 1px 1px #f4f4f4;
}

.combo.off::before {
    border-color: #aaa;
    background: #ececec;
}

.combo.off::after {
    right: 3px;
    border-width: 5px;
    border-bottom: none;
    border-top-color: #999;
}

/* status line */
.status {
    display: grid;
    grid-template-columns: 473fr 473fr 21fr 35fr 22fr;
    align-items: center;
    flex: none;
    height: 23px;
    background: #dadada;
    border-bottom: 1px solid #8f8f8f;
}

.status p {
    margin: 0 0 0 2px;
    font-size: 13px;
    font-weight: bold;
}

.status span, .status button {
    align-self: stretch;
    border-left: 1px solid #aaa;
    box-shadow: inset 1px 0 #f5f5f5;
}

.status button {
    display: grid;
    place-items: center;
}

.status svg {
    width: 15px;
    height: 15px;
}

/* graphics window */
.work {
    position: relative;
    display: flex;
    flex-direction: column;
    flex: 1;
    min-height: 0;
}

.track {
    flex: none;
    height: 15px;
    padding: 4px 0 0 5px;
    background: #cdcdcd;
    border-bottom: 2px solid #77776f;
}

.track i {
    display: block;
    height: 5px;
    border: 1px solid #8c8c8c;
    border-bottom-color: #f7f7f7;
    border-radius: 4px 0 0 4px;
    background: #d8d8d8;
}

.viewport {
    display: grid;
    flex: 1;
    min-height: 0;
    overflow: hidden;
    border-left: 1px solid #66665e;
    background: linear-gradient(#0480c1, #e6e8ea 78%);
}

.viewport > * {
    grid-area: 1 / 1;
}

.overlay {
    width: 100%;
    height: 100%;
}

.wcs {
    font: 9px "Liberation Sans", sans-serif;
    fill: #8a4a20;
}

.triad {
    font: 9px "Liberation Sans", sans-serif;
}

/* dialog */
.dialog {
    position: absolute;
    top: 0;
    right: 0;
    bottom: 0;
    display: flex;
    flex-direction: column;
    width: 304px;
}

.dialog-bar {
    display: flex;
    align-self: flex-end;
    flex: none;
    height: 20px;
    background: #1e1e1e;
    border: 1px solid #888;
}

.dialog-bar button {
    display: grid;
    place-items: center;
    width: 20px;
    border-right: 1px solid #777;
}

.dialog-bar svg {
    width: 14px;
    height: 14px;
}

.dialog-bar .step {
    width: 18px;
    background: #e8e8e8;
}

.dialog-bar h2 {
    width: 84px;
    margin: 0;
    border-right: 1px solid #777;
    color: #fff;
    font-size: 14px;
    line-height: 17px;
    text-align: center;
}

.dialog-body {
    display: flex;
    flex-direction: column;
    flex: 1;
    min-height: 0;
    padding: 7px 5px 0 6px;
    border: 1px solid #6e6e6e;
    border-bottom: 8px solid #1a1a1a;
    border-radius: 3px 0 5px 5px;
    background: #ededed;
}

.scroller {
    display: flex;
    flex: 1;
    gap: 1px;
    min-height: 0;
}

.sections {
    flex: 1;
    overflow: hidden;
    border-right: 1px solid #777;
}

h3 {
    display: flex;
    justify-content: space-between;
    height: 23px;
    margin: 0;
    padding-left: 6px;
    border-bottom: 1px solid #777;
    background: linear-gradient(#fafafa, #ececee 50%, #d9dbdd 51%, #e0e2e4);
    font-size: 13px;
    line-height: 21px;
}

.fold {
    display: grid;
    place-items: center;
    width: 22px;
    border-left: 1px solid #fff;
    box-shadow: -1px 0 #b5b5b5;
}

.fold::before {
    content: "";
    width: 12px;
    height: 11px;
    background: #6a6a6a;
    clip-path: polygon(38% 0, 62% 0, 100% 100%, 74% 100%, 50% 40%, 26% 100%, 0 100%);
}

.part {
    padding: 7px 9px 10px 8px;
    background: #d3d3d3;
    box-shadow: inset 2px 3px 3px -1px #a2a2a2, inset -2px -1px 2px #bbb;
}

.combo.big {
    align-items: center;
    width: auto;
    height: 24px;
}

.big svg {
    width: 16px;
    height: 16px;
    margin: 0 3px 0 4px;
}

.big::before {
    width: 17px;
}

.big::after {
    top: 9px;
    border-width: 5px;
    border-bottom: none;
    right: 3px;
}

.line {
    display: flex;
    align-items: center;
    gap: 3px;
    height: 30px;
}

.line > span:not(.number), .line > label {
    flex: 1;
}

.tick {
    width: 14px;
    height: 14px;
    margin: 0 1px;
}

.line button {
    flex: none;
}

.pick, .small, .drop {
    border: 1px solid #666;
    border-radius: 3px;
    background: linear-gradient(#f4f4f4, #cfcfcf);
}

.pick {
    width: 31px;
    height: 30px;
    margin-left: auto;
}

.focus {
    outline: 1px dotted #000;
    outline-offset: -3px;
}

.small {
    display: grid;
    place-items: center;
    width: 23px;
    height: 22px;
}

.small svg {
    width: 20px;
    height: 20px;
}

.drop {
    display: flex;
    width: 43px;
    height: 30px;
    overflow: hidden;
}

.drop b {
    margin-left: 1px;
    font-weight: normal;
    line-height: 17px;
}

.drop svg {
    width: 7px;
    height: 24px;
    margin: 4px 0 0;
}

.drop i {
    display: grid;
    place-items: center;
    width: 16px;
    margin-left: auto;
    background: linear-gradient(#eef6ff, #5ba1ec);
    border: 1px solid #2a62b0;
}

.drop i::before {
    content: "";
    border: 4px solid transparent;
    border-top-color: #111;
    border-bottom: none;
}

.drop.hot {
    border-color: #7d4b2a;
    background: linear-gradient(#ffd9b8, #ff9852);
}

.drop.hot svg {
    width: 23px;
    height: 23px;
    margin: 3px 1px;
}

.drop.hot i {
    background: linear-gradient(#ffe6d0, #ff9852);
    border-color: #e07030;
}

.active {
    border-radius: 5px;
    background: linear-gradient(90deg, #dfa56c 35%, #d3d3d3 68%);
}

.values, .settings {
    padding-top: 5px;
    padding-bottom: 8px;
}

.values .line {
    height: 24px;
}

.number {
    display: flex;
    width: 107px;
    height: 20px;
    border: 1px solid #777;
    border-radius: 3px;
    background: #d6d6d6;
    overflow: hidden;
}

.number input {
    width: 54px;
    padding: 0 0 3px 3px;
    border: none;
    background: #fff;
    font-size: 11px;
}

.number em {
    flex: 1;
    padding: 1px 0 0 4px;
    font: 10px/19px "Liberation Mono", monospace;
}

.number button {
    width: 17px;
    border: 1px solid #2a62b0;
    background: linear-gradient(#d7e9ff, #5ba1ec);
}

.number button::before {
    content: "";
    display: block;
    width: 12px;
    height: 12px;
    margin: auto;
    background: #151515;
    clip-path: polygon(30% 0, 70% 0, 70% 40%, 100% 40%, 50% 100%, 0 40%, 30% 40%);
}

.check {
    display: flex;
    align-items: center;
    gap: 1px;
    height: 22px;
}

.check input {
    appearance: none;
    width: 16px;
    height: 16px;
    border: 1px solid #666;
    border-radius: 2px;
    background: linear-gradient(#d8d8d8, #f2f2f2);
}

.check input:checked {
    display: grid;
    place-items: center;
    border-color: #234c70;
    background: linear-gradient(#d9f1ff, #5cc4ee);
}

.check input:checked::before {
    content: "";
    width: 5px;
    height: 9px;
    margin-top: -3px;
    border: solid #0d4a94;
    border-width: 0 3px 3px 0;
    transform: rotate(45deg);
}

.scrollbar {
    display: flex;
    flex-direction: column;
    width: 16px;
    background: #f3f2ec;
}

.scrollbar button {
    display: grid;
    place-items: center;
    flex: none;
    height: 16px;
    border: 1px solid #a9bfee;
    border-radius: 2px;
    background: #c6d7fb;
}

.scrollbar svg {
    width: 12px;
    height: 12px;
}

.thumb {
    display: grid;
    place-items: center;
    height: 87%;
    margin-bottom: auto;
    border: 1px solid #8fabdf;
    border-radius: 2px;
    background: linear-gradient(90deg, #dbe7ff, #c2d6fb);
}

.thumb::before {
    content: "";
    width: 7px;
    height: 8px;
    background: repeating-linear-gradient(#f4f8ff 0 1px, #94b0e6 1px 2px);
}

.dialog footer {
    display: flex;
    justify-content: flex-end;
    gap: 7px;
    margin-top: 3px;
    padding: 5px 11px 9px 0;
    border-top: 1px solid #aaa;
}

.dialog footer button {
    width: 52px;
    height: 19px;
    border: 1px solid #666;
    border-radius: 3px;
    background: linear-gradient(#fff, #ebebeb 50%, #d5d5d5 51%, #eee);
    line-height: 16px;
}

.dialog footer .ok {
    border-color: #3c5c34;
    background: linear-gradient(#d5f2c8, #a2df8a 50%, #74c95e 51%, #b4f094);
}

.assemblies {
    height: 36px;
    border-top: 2px solid #f5f5ea;
    grid-template-columns: 882fr 142fr;
}

.assemblies .group {
    border-right: 1px solid #b0b0b0;
}
```

FILE: model.js
```
// Spiral of wedge copies: each one turns 30 degrees and climbs one thickness.
var COPIES = 24;
var STEP = { x: 2.65, y: 12 };         // drop between two neighbouring wedges
var AXIS_A = { x: -98, y: -77.3 };     // projected radius at 0 degrees
var AXIS_B = { x: -86, y: 95 };        // projected radius at 90 degrees
var TOP = { x: 393, y: 130.7 };        // centre of the highest wedge

var canvas = document.getElementById('model');
var ctx = canvas.getContext('2d');
var edges = document.createElement('canvas');
edges.width = canvas.width;
edges.height = canvas.height;
var ink = edges.getContext('2d');

function point(k, degrees, radius) {
    var t = degrees * Math.PI / 180;
    return {
        x: TOP.x + (COPIES - k) * STEP.x + radius * (AXIS_A.x * Math.cos(t) + AXIS_B.x * Math.sin(t)),
        y: TOP.y + (COPIES - k) * STEP.y + radius * (AXIS_A.y * Math.cos(t) + AXIS_B.y * Math.sin(t))
    };
}

// Closed outline of the top face: outer arc, then inner arc backwards
function outline(k) {
    var start = 30 * (k - 21);
    var pts = [];
    for (var i = 0; i <= 6; i++) pts.push(point(k, start + i * 5, 1));
    for (i = 6; i >= 0; i--) pts.push(point(k, start + i * 5, 0.5));
    return pts;
}

function lower(p) {
    return { x: p.x + STEP.x, y: p.y + STEP.y };
}

function trace(c, pts) {
    c.beginPath();
    pts.forEach(function(p, i) {
        if (i) c.lineTo(p.x, p.y); else c.moveTo(p.x, p.y);
    });
    c.closePath();
}

function segment(c, p, q) {
    c.beginPath();
    c.moveTo(p.x, p.y);
    c.lineTo(q.x, q.y);
    c.stroke();
}

function drawWedge(k) {
    var pts = outline(k);
    var bottom = pts.map(lower);
    var first = k === 0;
    var shown = pts.map(function(p, i) {
        var q = pts[(i + 1) % pts.length];
        return (q.x - p.x) * STEP.y - (q.y - p.y) * STEP.x > 0;
    });

    // faces
    pts.forEach(function(p, i) {
        var j = (i + 1) % pts.length;
        trace(ctx, [p, pts[j], bottom[j], bottom[i]]);
        if (!first) {
            ctx.fillStyle = 'rgba(128, 144, 154, 0.33)';
            ctx.fill();
        } else if (shown[i]) {
            ctx.fillStyle = ctx.strokeStyle = '#39454a';
            ctx.lineWidth = 1;
            ctx.fill();
            ctx.stroke();
        }
    });
    trace(ctx, pts);
    ctx.fillStyle = first ? '#cae0e7' : 'rgba(212, 230, 238, 0.36)';
    ctx.fill();

    // hidden edges
    if (!first) {
        ctx.strokeStyle = 'rgba(208, 208, 208, 0.85)';
        ctx.lineWidth = 2;
        trace(ctx, bottom);
        ctx.stroke();
        trace(ctx, pts);
        ctx.stroke();
        [0, 6, 7, 13].forEach(function(i) {
            segment(ctx, pts[i], bottom[i]);
        });
    }

    // visible edges: wipe what this wedge covers, then ink its own
    ink.globalCompositeOperation = 'destination-out';
    trace(ink, pts);
    ink.fill();
    trace(ink, bottom);
    ink.fill();
    pts.forEach(function(p, i) {
        var j = (i + 1) % pts.length;
        trace(ink, [p, pts[j], bottom[j], bottom[i]]);
        ink.fill();
    });
    ink.globalCompositeOperation = 'source-over';
    ink.strokeStyle = '#2e2e2e';
    ink.lineWidth = first ? 1 : 2.5;
    trace(ink, pts);
    ink.stroke();
    ink.lineWidth = first ? 1 : 2;
    pts.forEach(function(p, i) {
        var before = shown[(i + pts.length - 1) % pts.length];
        if (shown[i]) segment(ink, bottom[i], bottom[(i + 1) % pts.length]);
        if (!first && [0, 6, 7, 13].indexOf(i) >= 0 && (shown[i] || before)) segment(ink, p, bottom[i]);
    });
}

ctx.lineJoin = ink.lineJoin = 'round';
for (var k = 0; k <= COPIES; k++) {
    drawWedge(k);
}
ctx.drawImage(edges, 0, 0);
```
